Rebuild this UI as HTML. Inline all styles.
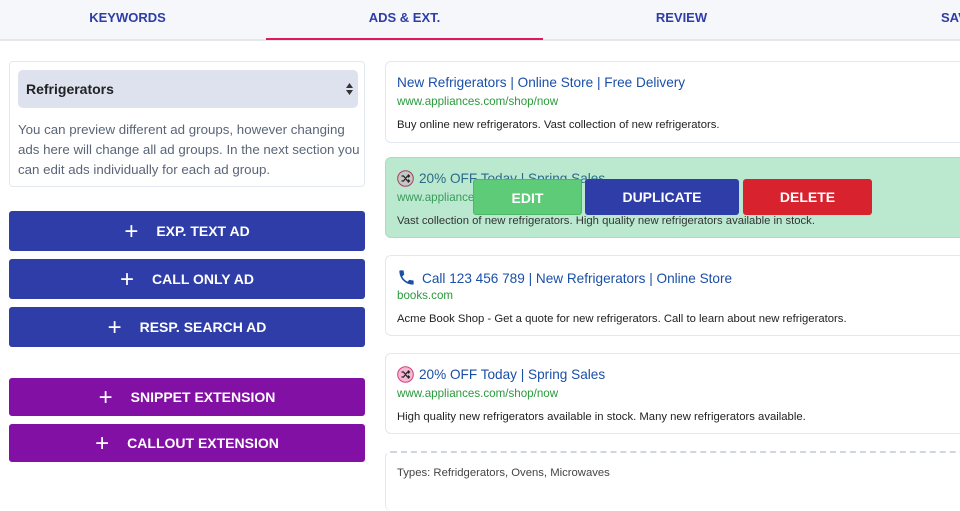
<!DOCTYPE html>
<html><head><style>
*{box-sizing:border-box;margin:0;padding:0}
body{width:960px;height:487px;overflow:hidden;background:#fff;font-family:"Liberation Sans",sans-serif;position:relative}
.hdr{position:absolute;left:0;top:0;width:960px;height:41px;background:#f5f7fa;border-bottom:2px solid #e4e7ec}
.tab{position:absolute;top:0;height:41px;width:277px;text-align:center;line-height:36px;color:#2e3da8;font-weight:bold;font-size:13px}
.ul{position:absolute;left:266px;top:38px;width:277px;height:2px;background:#e0195a}
.lc{position:absolute;left:9px;top:61px;width:356px;height:126px;border:1px solid #e3e7ef;border-radius:4px}
.sel{position:absolute;left:8px;top:8px;width:340px;height:38px;background:#dde2ee;border-radius:5px;font-weight:bold;font-size:14px;line-height:38px;padding-left:8px;color:#222}
.desc{position:absolute;left:8px;top:58px;width:345px;font-size:13.3px;line-height:20px;color:#5a6577}
.btn{position:absolute;left:9px;width:356px;border-radius:3px;color:#fff;font-weight:bold;font-size:14px;text-align:center}
.b{background:#2e3da8}.p{background:#8310a5}
.btn span{font-weight:normal;font-size:24px;vertical-align:-3px;margin-right:18px}
.card{position:absolute;left:385px;width:590px;border:1px solid #e3e7ef;border-radius:6px;padding:12px 11px}
.t{color:#1a4fa8;font-size:13.6px;height:17px;line-height:17px}
.u{color:#2a9a3c;font-size:11.6px;margin-top:4px;height:14px}
.d{color:#222;font-size:11.3px;margin-top:10px}
.ic{display:inline-block;width:17px;height:17px;vertical-align:-4px;margin-right:5px}
.ob{position:absolute;top:179px;height:36px;border-radius:3px;color:#fff;font-weight:bold;font-size:14px;text-align:center;line-height:36px}
</style></head><body>
<div class="hdr">
<div class="tab" style="left:-11px">KEYWORDS</div>
<div class="tab" style="left:266px">ADS &amp; EXT.</div>
<div class="tab" style="left:543px">REVIEW</div>
<div class="tab" style="left:941px;width:40px;text-align:left">SAVE</div>
<div class="ul"></div>
</div>
<div class="lc"><div class="sel">Refrigerators<svg style="position:absolute;right:5px;top:13px" width="7" height="12" viewBox="0 0 7 12"><path d="M0 5L3.5 0L7 5Z M0 7L3.5 12L7 7Z" fill="#333"/></svg></div>
<div class="desc">You can preview different ad groups, however changing ads here will change all ad groups. In the next section you can edit ads individually for each ad group.</div></div>
<div class="btn b" style="top:211px;height:40px;line-height:40px"><span>+</span>EXP. TEXT AD</div>
<div class="btn b" style="top:259px;height:40px;line-height:40px"><span>+</span>CALL ONLY AD</div>
<div class="btn b" style="top:307px;height:40px;line-height:40px"><span>+</span>RESP. SEARCH AD</div>
<div class="btn p" style="top:378px;height:38px;line-height:38px"><span>+</span>SNIPPET EXTENSION</div>
<div class="btn p" style="top:424px;height:38px;line-height:38px"><span>+</span>CALLOUT EXTENSION</div>

<div class="card" style="top:61px;height:82px"><div class="t">New Refrigerators | Online Store | Free Delivery</div><div class="u">www.appliances.com/shop/now</div><div class="d">Buy online new refrigerators. Vast collection of new refrigerators.</div></div>
<div class="card" style="top:157px;height:81px;background:#bbe9d0;border-color:#a9dcc0"><div class="t" style="color:#2a6c88"><svg class="ic" viewBox="0 0 17 17"><circle cx="8.5" cy="8.5" r="7.8" fill="#c6c6c6" stroke="#a04060" stroke-width="1"/><path d="M4.5 6h2l4 5h2M4.5 11h2l4-5h2M11 4.5l1.5 1.5L11 7.5M11 9.5l1.5 1.5L11 12.5" stroke="#222" stroke-width="1.2" fill="none"/></svg>20% OFF Today | Spring Sales</div><div class="u" style="color:#3a9a5a">www.appliances.com/shop/now</div><div class="d" style="color:#333">Vast collection of new refrigerators. High quality new refrigerators available in stock.</div></div>
<div class="ob" style="left:473px;width:109px;background:#5ecb78;border:1px solid #4cb866">EDIT</div>
<div class="ob" style="left:585px;width:154px;background:#2e3da8">DUPLICATE</div>
<div class="ob" style="left:743px;width:129px;background:#d8232f">DELETE</div>
<div class="card" style="top:255px;height:81px"><div class="t"><svg class="ic" viewBox="0 0 24 24" style="width:19px;height:19px;margin-right:6px"><path d="M6.6 10.8c1.4 2.8 3.8 5.1 6.6 6.6l2.2-2.2c.3-.3.7-.4 1-.2 1.1.4 2.3.6 3.6.6.6 0 1 .4 1 1V20c0 .6-.4 1-1 1C10.6 21 3 13.4 3 4c0-.6.4-1 1-1h3.5c.6 0 1 .4 1 1 0 1.3.2 2.5.6 3.6.1.3 0 .7-.2 1z" fill="#1a4fa8"/></svg>Call 123 456 789 | New Refrigerators | Online Store</div><div class="u">books.com</div><div class="d">Acme Book Shop - Get a quote for new refrigerators. Call to learn about new refrigerators.</div></div>
<div class="card" style="top:353px;height:81px"><div class="t"><svg class="ic" viewBox="0 0 17 17"><circle cx="8.5" cy="8.5" r="7.8" fill="#f7b8d4" stroke="#d0407a" stroke-width="1"/><path d="M4.5 6h2l4 5h2M4.5 11h2l4-5h2M11 4.5l1.5 1.5L11 7.5M11 9.5l1.5 1.5L11 12.5" stroke="#222" stroke-width="1.2" fill="none"/></svg>20% OFF Today | Spring Sales</div><div class="u">www.appliances.com/shop/now</div><div class="d">High quality new refrigerators available in stock. Many new refrigerators available.</div></div>
<div class="card" style="top:451px;height:60px;border:none;border-top:2px dashed #d0d6e0;border-left:1px solid #e3e7ef;padding-top:14px"><div class="d" style="margin:0;color:#444">Types: Refridgerators, Ovens, Microwaves</div></div>
</body></html>
